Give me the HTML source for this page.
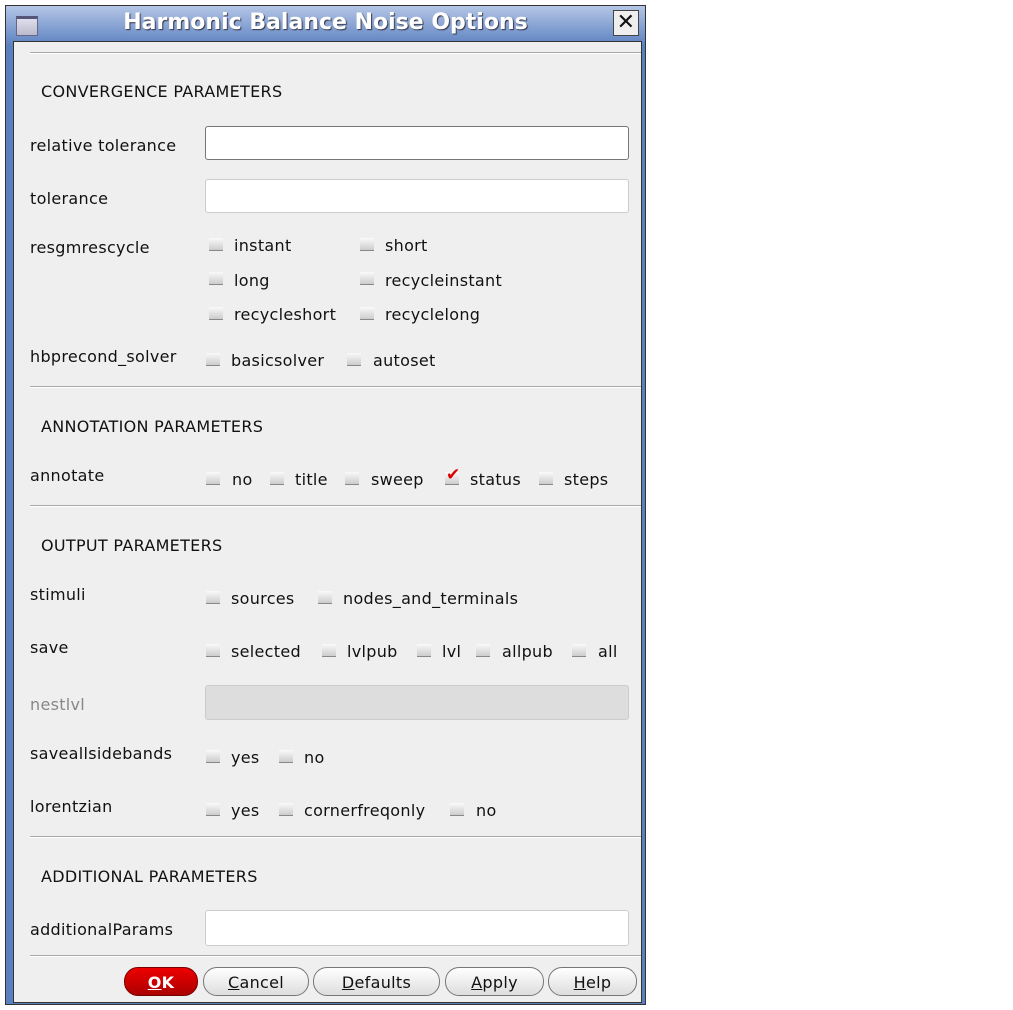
<!DOCTYPE html><html><head><style>
body{margin:0;width:1013px;height:1010px;background:#fff;position:relative;font-family:"DejaVu Sans","Liberation Sans",sans-serif;font-size:16px;letter-spacing:0.3px;color:#111;overflow:hidden}
.win{position:absolute;left:5px;top:5px;width:639px;height:998px;border:1px solid #333;background:linear-gradient(#b4c6e6,#5b80c0 40px,#5b80c0)}
.title{position:absolute;left:0;top:0;width:639px;height:34px;text-align:center;line-height:34px;color:#fff;font-weight:bold;font-size:22px;letter-spacing:0;text-shadow:1px 1px 1px #334}
.in{position:absolute;left:7px;top:35px;width:627px;height:960px;background:#efefef;border:1px solid #333}
.a{position:absolute;white-space:nowrap}
.hr{position:absolute;left:16px;width:611px;height:0;border-top:1px solid #aaa;border-bottom:1px solid #fff}
.tf{position:absolute;left:191px;width:424px;height:34px;background:#fff;border:1px solid #999;border-radius:3px;box-sizing:border-box}
.cb{position:absolute;width:14px;height:13px;background:linear-gradient(#fafafa,#ccc);border-bottom:1px solid #888;box-sizing:border-box}
.btn{position:absolute;top:925px;height:29px;border:1px solid #777;border-radius:14px;background:linear-gradient(#fff,#ddd);text-align:center;line-height:29px;box-sizing:border-box}
.btn u{text-decoration:underline}
.t{position:absolute;left:0;top:-6px}
.g{position:absolute;left:0;top:-5px}
</style></head><body>
<div class="win">
<div class="title">Harmonic Balance Noise Options</div>
<div style="position:absolute;left:10px;top:10px;width:20px;height:16px;background:linear-gradient(#dde,#bbc);border:1px solid #668;border-top:3px solid #557"></div>
<div style="position:absolute;left:607px;top:4px;width:24px;height:24px;background:#eee;border:1px solid #444;font-size:22px;line-height:24px;text-align:center;color:#111">✕</div>
<div class="in">
<div class="hr" style="top:10px"></div>
<div class="g">
<div class="tf" style="top:89px;border-color:#777"></div>
<div class="tf" style="top:142px;border-color:#ccc"></div>
<div class="tf" style="top:648px;background:#ddd;border-color:#ccc;height:35px"></div>
<div class="tf" style="top:873px;border-color:#ccc;height:36px"></div>
<div class="cb" style="left:195px;top:201px"></div><div class="cb" style="left:346px;top:201px"></div>
<div class="cb" style="left:195px;top:235px"></div><div class="cb" style="left:346px;top:235px"></div>
<div class="cb" style="left:195px;top:270px"></div><div class="cb" style="left:346px;top:270px"></div>
<div class="cb" style="left:192px;top:316px"></div><div class="cb" style="left:333px;top:316px"></div>
<div class="cb" style="left:192px;top:435px"></div><div class="cb" style="left:256px;top:435px"></div>
<div class="cb" style="left:331px;top:435px"></div><div class="cb" style="left:431px;top:435px"></div>
<div class="cb" style="left:525px;top:435px"></div>
<div class="cb" style="left:192px;top:554px"></div><div class="cb" style="left:304px;top:554px"></div>
<div class="cb" style="left:192px;top:607px"></div><div class="cb" style="left:308px;top:607px"></div>
<div class="cb" style="left:403px;top:607px"></div><div class="cb" style="left:462px;top:607px"></div>
<div class="cb" style="left:558px;top:607px"></div>
<div class="cb" style="left:192px;top:713px"></div><div class="cb" style="left:265px;top:713px"></div>
<div class="cb" style="left:192px;top:766px"></div><div class="cb" style="left:265px;top:766px"></div>
<div class="cb" style="left:436px;top:766px"></div>
<div class="a" style="left:432px;top:428px;color:#d00;font-size:17px">✔</div>
<div class="hr" style="top:349px"></div>
<div class="hr" style="top:468px"></div>
<div class="hr" style="top:799px"></div>
<div class="hr" style="top:918px"></div>
</div>
<div class="t">
<div class="a" style="left:27px;top:46px">CONVERGENCE PARAMETERS</div>
<div class="a" style="left:16px;top:100px">relative tolerance</div>
<div class="a" style="left:16px;top:153px">tolerance</div>
<div class="a" style="left:16px;top:202px">resgmrescycle</div>
<div class="a" style="left:220px;top:200px">instant</div>
<div class="a" style="left:371px;top:200px">short</div>
<div class="a" style="left:220px;top:235px">long</div>
<div class="a" style="left:371px;top:235px">recycleinstant</div>
<div class="a" style="left:220px;top:269px">recycleshort</div>
<div class="a" style="left:371px;top:269px">recyclelong</div>
<div class="a" style="left:16px;top:311px">hbprecond_solver</div>
<div class="a" style="left:217px;top:315px">basicsolver</div>
<div class="a" style="left:359px;top:315px">autoset</div>
<div class="a" style="left:27px;top:381px">ANNOTATION PARAMETERS</div>
<div class="a" style="left:16px;top:430px">annotate</div>
<div class="a" style="left:218px;top:434px">no</div>
<div class="a" style="left:281px;top:434px">title</div>
<div class="a" style="left:357px;top:434px">sweep</div>
<div class="a" style="left:456px;top:434px">status</div>
<div class="a" style="left:550px;top:434px">steps</div>
<div class="a" style="left:27px;top:500px">OUTPUT PARAMETERS</div>
<div class="a" style="left:16px;top:549px">stimuli</div>
<div class="a" style="left:217px;top:553px">sources</div>
<div class="a" style="left:329px;top:553px">nodes_and_terminals</div>
<div class="a" style="left:16px;top:602px">save</div>
<div class="a" style="left:217px;top:606px">selected</div>
<div class="a" style="left:333px;top:606px">lvlpub</div>
<div class="a" style="left:428px;top:606px">lvl</div>
<div class="a" style="left:488px;top:606px">allpub</div>
<div class="a" style="left:584px;top:606px">all</div>
<div class="a" style="left:16px;top:659px;color:#888">nestlvl</div>
<div class="a" style="left:16px;top:708px">saveallsidebands</div>
<div class="a" style="left:217px;top:712px">yes</div>
<div class="a" style="left:290px;top:712px">no</div>
<div class="a" style="left:16px;top:761px">lorentzian</div>
<div class="a" style="left:217px;top:765px">yes</div>
<div class="a" style="left:290px;top:765px">cornerfreqonly</div>
<div class="a" style="left:462px;top:765px">no</div>
<div class="a" style="left:27px;top:831px">ADDITIONAL PARAMETERS</div>
<div class="a" style="left:16px;top:884px">additionalParams</div>
</div>
<div class="btn" style="left:110px;width:74px;background:linear-gradient(#e00,#a00);border-color:#700;color:#fff;font-weight:bold"><u>O</u>K</div>
<div class="btn" style="left:189px;width:106px"><u>C</u>ancel</div>
<div class="btn" style="left:299px;width:127px"><u>D</u>efaults</div>
<div class="btn" style="left:431px;width:99px"><u>A</u>pply</div>
<div class="btn" style="left:534px;width:89px"><u>H</u>elp</div>
</div></div>
</body></html>
